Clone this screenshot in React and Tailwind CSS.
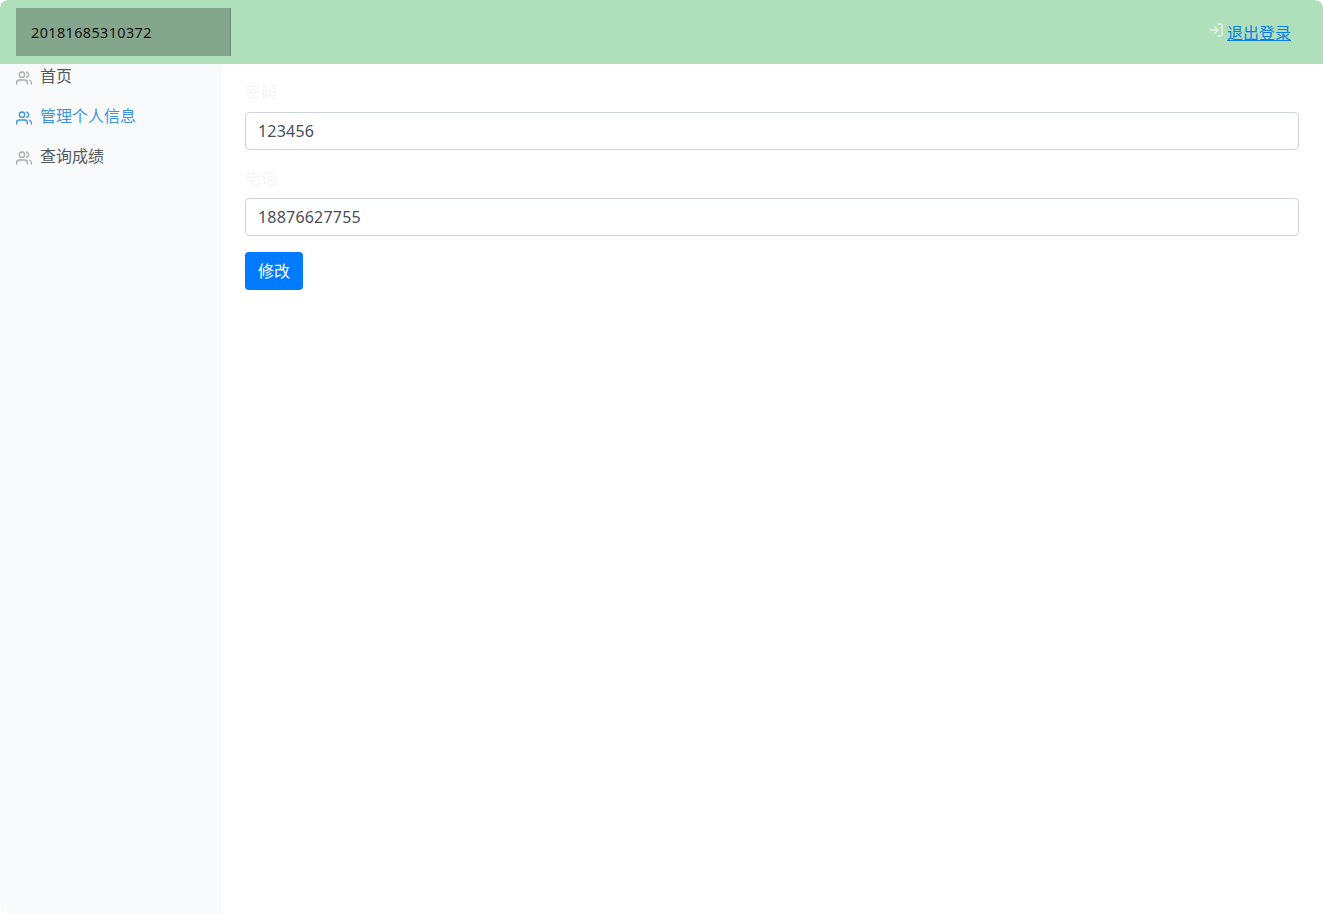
const font = "font-['Noto_Sans','Noto_Sans_CJK_SC',sans-serif]";

function UsersIcon({ className }) {
  return (
    <svg viewBox="0 0 24 24" width="16" height="16" fill="none" stroke="currentColor" strokeWidth="2" strokeLinecap="round" strokeLinejoin="round" className={className}>
      <path d="M17 21v-2a4 4 0 0 0-4-4H5a4 4 0 0 0-4 4v2" />
      <circle cx="9" cy="7" r="4" />
      <path d="M23 21v-2a4 4 0 0 0-3-3.87" />
      <path d="M16 3.13a4 4 0 0 1 0 7.75" />
    </svg>
  );
}

function LogInIcon({ className }) {
  return (
    <svg viewBox="0 0 24 24" width="16" height="16" fill="none" stroke="currentColor" strokeWidth="2" strokeLinecap="round" strokeLinejoin="round" className={className}>
      <path d="M15 3h4a2 2 0 0 1 2 2v14a2 2 0 0 1-2 2h-4" />
      <polyline points="10 17 15 12 10 7" />
      <line x1="15" y1="12" x2="3" y2="12" />
    </svg>
  );
}

function NavItem({ label, active }) {
  return (
    <a className={`flex items-center h-10 pl-4 text-base ${active ? "text-[#3f94de]" : "text-[#555a60]"}`}>
      <UsersIcon className={`mr-2 mt-1 ${active ? "text-[#3f94de]" : "text-[#a9adb1]"}`} />
      <span>{label}</span>
    </a>
  );
}

function Field({ label, value }) {
  return (
    <div className="mb-4">
      <label className="block h-6 mb-2 text-base leading-6 text-[#f6f6f6]">{label}</label>
      <input
        readOnly
        value={value}
        className="block w-full h-[38px] px-3 text-base text-[#495057] bg-white border border-[#ced4da] rounded tracking-[0.2px] outline-none"
      />
    </div>
  );
}

export default function App() {
  return (
    <div className={`${font} w-[1323px] h-[914px] overflow-hidden flex flex-col bg-white rounded-lg`}>
      <header className="relative z-10 h-16 shrink-0 bg-[#b0dfbb] flex items-center rounded-t-lg">
        <div className="ml-4 w-[215px] h-12 bg-[#84a68c] border-r border-[#6e8c75] flex items-center pl-[15px] pt-px text-[14.4px] text-[#111] tracking-[0.4px]">
          20181685310372
        </div>
        <div className="ml-auto mr-[32px] flex items-center">
          <LogInIcon className="text-[#e4f4e8] mr-[3px] -mt-1" />
          <a className="pt-px text-base text-[#0a7fe8] underline">退出登录</a>
        </div>
      </header>
      <div className="flex-1 flex min-h-0">
        <aside className="w-[221px] shrink-0 bg-[#f9fafc] border-r border-[#f5f6f7] -mt-2 rounded-bl-lg">
          <NavItem label="首页" />
          <NavItem label="管理个人信息" active />
          <NavItem label="查询成绩" />
        </aside>
        <main className="flex-1 pl-6 pr-6 pt-4">
          <Field label="密码" value="123456" />
          <Field label="电话" value="18876627755" />
          <button className="h-[38px] w-[58px] bg-[#007bff] text-white text-base rounded">修改</button>
        </main>
      </div>
    </div>
  );
}
